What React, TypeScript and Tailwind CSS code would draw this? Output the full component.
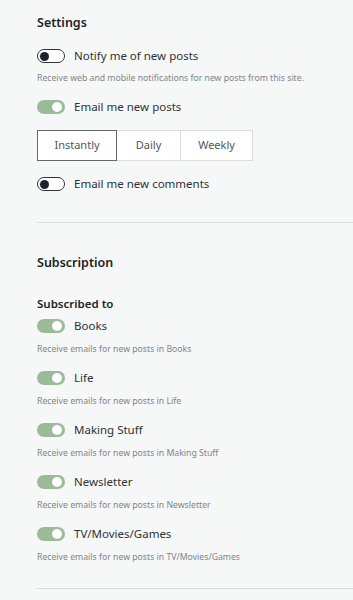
import React from "react";

const Toggle = ({ on }: { on: boolean }) =>
  on ? (
    <span className="relative inline-flex h-[14px] w-[28px] shrink-0 items-center rounded-full bg-[#9bba98]">
      <span className="absolute right-[3px] h-[10px] w-[10px] rounded-full bg-white" />
    </span>
  ) : (
    <span className="relative inline-flex h-[14px] w-[28px] shrink-0 items-center rounded-full border border-[#2c3338] bg-white">
      <span className="absolute left-[2px] h-[9px] w-[9px] rounded-full bg-[#1d2327]" />
    </span>
  );

const Row = ({ on, label }: { on: boolean; label: string }) => (
  <div className="flex items-center gap-[9px] h-[16px]">
    <Toggle on={on} />
    <span className="text-[11.5px] text-[#2c3338]">{label}</span>
  </div>
);

const Desc = ({ children }: { children: React.ReactNode }) => (
  <p className="text-[8.7px] leading-[12px] text-[#80858a]">{children}</p>
);

const categories = ["Books", "Life", "Making Stuff", "Newsletter", "TV/Movies/Games"];

export default function App() {
  return (
    <div
      className="min-h-[600px] w-[353px] overflow-hidden bg-[#f6f7f7] pl-[37px]"
      style={{ fontFamily: "'Noto Sans', 'Open Sans', sans-serif" }}
    >
      {/* Settings */}
      <div className="pt-[14px]">
        <h2 className="text-[12.5px] font-semibold text-[#1d2327] leading-[18px]">Settings</h2>
        <div className="mt-[16px]">
          <Row on={false} label="Notify me of new posts" />
        </div>
        <div className="mt-[8px]">
          <Desc>Receive web and mobile notifications for new posts from this site.</Desc>
        </div>
        <div className="mt-[15px]">
          <Row on={true} label="Email me new posts" />
        </div>
        <div className="mt-[15px] flex h-[31px] w-[216px] text-[11px] text-[#50575e]">
          <button className="w-[80px] border border-[#646970] bg-white">Instantly</button>
          <button className="w-[63px] border-y border-[#dcdcde] bg-white">Daily</button>
          <button className="w-[73px] border border-[#dcdcde] bg-white">Weekly</button>
        </div>
        <div className="mt-[15px]">
          <Row on={false} label="Email me new comments" />
        </div>
      </div>

      <div className="mt-[30px] border-t border-[#dcdcde]" />

      {/* Subscription */}
      <div className="pt-[31px]">
        <h2 className="text-[12.5px] font-semibold text-[#1d2327] leading-[18px]">Subscription</h2>
        <h3 className="mt-[24px] text-[11.5px] font-semibold text-[#1d2327] leading-[16px]">Subscribed to</h3>
        <div className="flex flex-col">
          {categories.map((c, i) => (
            <div key={c} className={i === 0 ? "mt-[6px]" : "mt-[15px]"}>
              <Row on={true} label={c} />
              <div className="mt-[9px]">
                <Desc>Receive emails for new posts in {c}</Desc>
              </div>
            </div>
          ))}
        </div>
      </div>

      <div className="mt-[25px] border-t border-[#dcdcde]" />
    </div>
  );
}
